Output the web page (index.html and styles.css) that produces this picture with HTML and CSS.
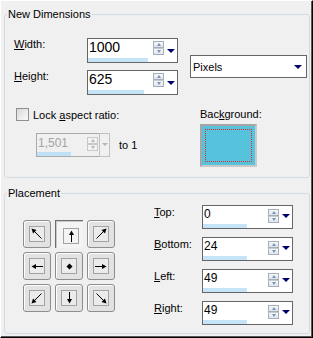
FILE: index.html
```html
<!DOCTYPE html>
<html lang="en">
<head>
  <meta charset="UTF-8" />
  <title>Canvas Size</title>
  <link rel="stylesheet" href="styles.css">
</head>
<body>
<div class="dialog">

  <fieldset class="group g1">
    <legend>New Dimensions</legend>
    <div class="dims">
      <div class="dims-left">
        <div class="frow">
          <span class="flabel"><u>W</u>idth:</span>
          <div class="spin big">
            <div class="spin-main"><span class="spin-val">1000</span><span class="bar" style="width:60px"></span></div>
            <div class="spin-btns"><span class="up"></span><span class="dn"></span></div>
            <span class="drop"></span>
          </div>
        </div>
        <div class="frow">
          <span class="flabel"><u>H</u>eight:</span>
          <div class="spin big">
            <div class="spin-main"><span class="spin-val">625</span><span class="bar" style="width:56px"></span></div>
            <div class="spin-btns"><span class="up"></span><span class="dn"></span></div>
            <span class="drop"></span>
          </div>
        </div>
        <label class="check"><span class="box"></span><span>Lock <u>a</u>spect ratio:</span></label>
        <div class="ratio">
          <div class="spin off">
            <div class="spin-main"><span class="spin-val">1,501</span><span class="bar" style="width:34px"></span></div>
            <div class="spin-btns"><span class="up"></span><span class="dn"></span></div>
          </div>
          <div class="dropbox"><span class="drop"></span></div>
          <span class="to">to 1</span>
        </div>
      </div>
      <div class="dims-right">
        <div class="select">Pixels<span class="drop"></span></div>
        <div class="bg-label">Bac<u>k</u>ground:</div>
        <div class="swatch"><div class="focus"></div></div>
      </div>
    </div>
  </fieldset>

  <fieldset class="group g2">
    <legend>Placement</legend>
    <div class="place">
      <div class="pgrid">
        <div class="pbtn"><div class="pin"><svg viewBox="0 0 14 14"><path d="M11.5 11.5L4 4" stroke="#000"/><path d="M1.5 1.5L6.5 3L3 6.5z"/></svg></div></div>
        <div class="pbtn on"><div class="pin"><svg viewBox="0 0 14 14"><path d="M7.5 5v8" stroke="#000"/><path d="M7.5 1.5L5 6h5z"/></svg></div></div>
        <div class="pbtn"><div class="pin"><svg viewBox="0 0 14 14"><path d="M2.5 11.5L10 4" stroke="#000"/><path d="M12.5 1.5L7.5 3L11 6.5z"/></svg></div></div>
        <div class="pbtn"><div class="pin"><svg viewBox="0 0 14 14"><path d="M5 7.5h8" stroke="#000"/><path d="M1.5 7.5L6 5v5z"/></svg></div></div>
        <div class="pbtn"><div class="pin"><svg viewBox="0 0 14 14"><path d="M7.5 4.5L10.5 7.5L7.5 10.5L4.5 7.5z"/></svg></div></div>
        <div class="pbtn"><div class="pin"><svg viewBox="0 0 14 14"><path d="M1 7.5h8" stroke="#000"/><path d="M12.5 7.5L8 5v5z"/></svg></div></div>
        <div class="pbtn"><div class="pin"><svg viewBox="0 0 14 14"><path d="M11.5 2.5L4 10" stroke="#000"/><path d="M1.5 12.5L3 7.5L6.5 11z"/></svg></div></div>
        <div class="pbtn"><div class="pin"><svg viewBox="0 0 14 14"><path d="M7.5 1v8" stroke="#000"/><path d="M7.5 12.5L5 8h5z"/></svg></div></div>
        <div class="pbtn"><div class="pin"><svg viewBox="0 0 14 14"><path d="M2.5 2.5L10 10" stroke="#000"/><path d="M12.5 12.5L7.5 11L11 7.5z"/></svg></div></div>
      </div>
      <div class="pfields">
        <div class="prow">
          <span class="plabel"><u>T</u>op:</span>
          <div class="spin small">
            <div class="spin-main"><span class="spin-val">0</span><span class="bar" style="width:44px"></span></div>
            <div class="spin-btns"><span class="up"></span><span class="dn"></span></div>
            <span class="drop"></span>
          </div>
        </div>
        <div class="prow">
          <span class="plabel"><u>B</u>ottom:</span>
          <div class="spin small">
            <div class="spin-main"><span class="spin-val">24</span><span class="bar" style="width:44px"></span></div>
            <div class="spin-btns"><span class="up"></span><span class="dn"></span></div>
            <span class="drop"></span>
          </div>
        </div>
        <div class="prow">
          <span class="plabel"><u>L</u>eft:</span>
          <div class="spin small">
            <div class="spin-main"><span class="spin-val">49</span><span class="bar" style="width:44px"></span></div>
            <div class="spin-btns"><span class="up"></span><span class="dn"></span></div>
            <span class="drop"></span>
          </div>
        </div>
        <div class="prow">
          <span class="plabel"><u>R</u>ight:</span>
          <div class="spin small">
            <div class="spin-main"><span class="spin-val">49</span><span class="bar" style="width:44px"></span></div>
            <div class="spin-btns"><span class="up"></span><span class="dn"></span></div>
            <span class="drop"></span>
          </div>
        </div>
      </div>
    </div>
  </fieldset>

</div>
</body>
</html>
```

FILE: styles.css
```css
body {
  margin: 0;
  font-family: "Liberation Sans", Arial, sans-serif;
  font-size: 11px;
  color: #000;
  background-color: #f0f0f0;
}

.dialog {
  width: 313px;
  height: 338px;
  box-sizing: border-box;
  border: 1px solid;
  border-color: #fff #000 #000 #fff;
  box-shadow: inset -1px -1px 0 #5a5a5a;
  overflow: hidden;
}

/* group boxes */
.group {
  width: 306px;
  box-sizing: border-box;
  margin: 6px 0 0 3px;
  padding: 0;
  border: 1px solid #d3dbe2;
  border-radius: 3px;
  min-inline-size: 0;
}

.group legend {
  margin-left: 2px;
  padding: 0 1px;
  line-height: 14px;
}

.g1 { height: 171px; }
.g2 { height: 148px; margin-top: 8px; }

.dims {
  display: flex;
}

.dims-left {
  width: 175px;
  padding-top: 17px;
}

.frow {
  display: flex;
  height: 25px;
}

.frow + .frow {
  margin-top: 7px;
}

.flabel {
  width: 73px;
  padding-left: 9px;
  line-height: 13px;
}

/* spin edit boxes */
.spin {
  display: flex;
  box-sizing: border-box;
  border: 1px solid #666;
  background: #fff;
}

.spin.big { width: 91px; height: 25px; }
.spin.small { width: 91px; height: 24px; }

.spin-main {
  flex: 1;
  display: flex;
  flex-direction: column;
}

.spin-val {
  flex: 1;
  padding-left: 1px;
}

.big .spin-val { font-size: 14px; line-height: 16px; }
.small .spin-val { font-size: 12px; line-height: 14px; padding-top: 1px; }

.bar {
  height: 4px;
  background: #c6e4f7;
}

.spin-btns {
  width: 11px;
  margin-top: 2px;
  display: flex;
  flex-direction: column;
  align-self: flex-start;
}

.small .spin-btns { margin-top: 3px; }

.spin-btns span {
  height: 7px;
  box-sizing: border-box;
  border: 1px solid #a6aeb9;
  background: linear-gradient(#f6f8fa, #dfe5ec);
  display: flex;
  justify-content: center;
  align-items: center;
}

.spin-btns .dn { border-top-color: #c3c9d1; }

.spin-btns span::before {
  content: "";
  width: 0;
  height: 0;
  border-left: 2.5px solid transparent;
  border-right: 2.5px solid transparent;
}

.spin-btns .up::before { border-bottom: 3px solid #7d93b3; }
.spin-btns .dn::before { border-top: 3px solid #7d93b3; }

.drop {
  width: 0;
  height: 0;
  border-left: 4px solid transparent;
  border-right: 4px solid transparent;
  border-top: 4px solid #00006b;
  margin: 10px 2px 0 3px;
  align-self: flex-start;
}

.small .drop { margin-top: 8px; }

/* checkbox row */
.check {
  display: flex;
  align-items: center;
  height: 15px;
  margin-top: 12px;
  padding-left: 11px;
}

.check .box {
  width: 13px;
  height: 13px;
  box-sizing: border-box;
  margin-right: 4px;
  border: 1px solid #8f8f8f;
  background: linear-gradient(135deg, #d8d8d8, #fbfbfb);
}

/* disabled ratio box */
.ratio {
  display: flex;
  align-items: center;
  margin-top: 11px;
  padding-left: 31px;
}

.spin.off {
  width: 64px;
  height: 24px;
  border-color: #aaa;
  background: #f0f0f0;
  color: #a3a3a3;
}

.off .spin-val { font-size: 12px; line-height: 14px; padding: 2px 0 0 1px; }
.off .bar { background: #bfe0f5; }
.off .spin-btns { margin: 3px 1px 0 0; }
.off .spin-btns span { border-color: #c8c8c8; background: #f2f2f2; }
.off .spin-btns .up::before { border-bottom-color: #b9b9b9; }
.off .spin-btns .dn::before { border-top-color: #b9b9b9; }

.dropbox {
  width: 11px;
  height: 24px;
  box-sizing: border-box;
  margin-left: -1px;
  border: 1px solid #c2c2c2;
  display: flex;
  justify-content: center;
}

.dropbox .drop {
  margin: 9px 0 0;
  border-left-width: 3px;
  border-right-width: 3px;
  border-top: 3px solid #b5b5b5;
}

.to {
  margin-left: 9px;
}

/* right column */
.dims-right {
  margin-left: 10px;
}

.select {
  margin-top: 34px;
  width: 117px;
  height: 23px;
  box-sizing: border-box;
  border: 1px solid #666;
  background: #fff;
  display: flex;
  align-items: center;
  padding-left: 2px;
}

.select .drop {
  margin: 1px 4px 0 auto;
  align-self: center;
}

.bg-label {
  margin: 30px 0 0 10px;
  line-height: 13px;
}

.swatch {
  margin: 3px 0 0 10px;
  width: 57px;
  height: 43px;
  box-sizing: border-box;
  border: 2px solid #a6a6a6;
  border-right-color: #c9c9c9;
  border-bottom-color: #c9c9c9;
  background: #56c2dc;
  padding: 3px;
}

.swatch .focus {
  height: 100%;
  box-sizing: border-box;
  border: 1px dotted #e02a22;
}

/* placement */
.place {
  display: flex;
}

.pgrid {
  margin: 20px 0 0 18px;
  display: grid;
  grid-template-columns: repeat(3, 28px);
  grid-auto-rows: 28px;
  gap: 4px;
  align-self: flex-start;
}

.pbtn {
  box-sizing: border-box;
  border: 1px solid #8d8d8d;
  border-radius: 3px;
  background: #e2e2e2;
  box-shadow: inset 1px 1px 0 #fff;
  display: flex;
  justify-content: center;
  align-items: center;
}

.pbtn.on {
  border: none;
  border-top: 1px solid #6f6f6f;
  border-left: 1px solid #6f6f6f;
  border-radius: 0;
  background: #f4f4f4;
  box-shadow: inset 1px 1px 0 #c8c8c8;
  padding: 2px 0 0 2px;
}

.pin {
  width: 16px;
  height: 16px;
  box-sizing: border-box;
  border: 1px solid #a3a3a3;
  background: #ebebeb;
}

.on .pin { background: #f4f4f4; }

.pin svg {
  display: block;
  width: 14px;
  height: 14px;
}

.pfields {
  margin-left: 39px;
  padding-top: 5px;
}

.prow {
  display: flex;
  height: 24px;
}

.prow + .prow {
  margin-top: 8px;
}

.plabel {
  width: 48px;
  line-height: 13px;
  padding-top: 1px;
}
```
